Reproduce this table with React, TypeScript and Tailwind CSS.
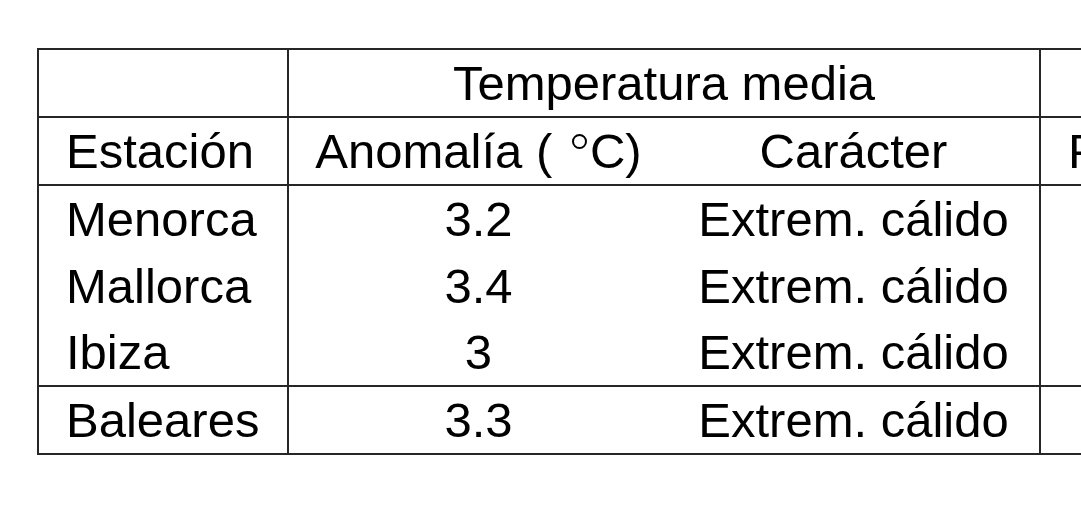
import React from 'react';

const rows = [
  { name: 'Menorca', anom: '3.2', car: 'Extrem. cálido', h: 'h-[66px]' },
  { name: 'Mallorca', anom: '3.4', car: 'Extrem. cálido', h: 'h-[67px]' },
  { name: 'Ibiza', anom: '3', car: 'Extrem. cálido', h: 'h-[66px]' },
];

const line = 'border-[#262626]';

const App: React.FC = () => {
  return (
    <div className="w-[1081px] h-[508px] overflow-hidden bg-white pt-[48px] pl-[37px] font-['Liberation_Sans',Arial,sans-serif] text-[49px] leading-[66px] text-black">
      <table className={`table-fixed w-[1404px] border-collapse border-2 ${line}`}>
        <colgroup>
          <col className="w-[250px]" />
          <col className="w-[380px]" />
          <col className="w-[372px]" />
          <col className="w-[402px]" />
        </colgroup>
        <thead>
          <tr className={`h-[66px] border-b-2 ${line}`}>
            <th className={`border-r-2 ${line} font-normal`}></th>
            <th colSpan={2} className={`border-r-2 ${line} font-normal text-center`}>
              Temperatura media
            </th>
            <th className="font-normal text-center">Precipitación</th>
          </tr>
          <tr className={`h-[66px] border-b-2 ${line}`}>
            <th className={`border-r-2 ${line} font-normal text-left px-[27px]`}>Estación</th>
            <th className="font-normal text-center whitespace-nowrap">
              Anomalía ({' '}
              <span className="inline-block ml-[6px] mr-[3px] w-[15px] h-[15px] rounded-full border-2 border-black align-[19px]"></span>
              C)
            </th>
            <th className={`border-r-2 ${line} font-normal text-center`}>Carácter</th>
            <th className="font-normal text-left px-[27px] whitespace-nowrap">Porcentaje</th>
          </tr>
        </thead>
        <tbody>
          {rows.map((r) => (
            <tr key={r.name} className={r.h}>
              <td className={`border-r-2 ${line} px-[27px]`}>{r.name}</td>
              <td className="text-center">{r.anom}</td>
              <td className={`border-r-2 ${line} text-center whitespace-nowrap`}>{r.car}</td>
              <td></td>
            </tr>
          ))}
          <tr className={`h-[67px] border-t-2 ${line}`}>
            <td className={`border-r-2 ${line} px-[27px]`}>Baleares</td>
            <td className="text-center">3.3</td>
            <td className={`border-r-2 ${line} text-center whitespace-nowrap`}>Extrem. cálido</td>
            <td></td>
          </tr>
        </tbody>
      </table>
    </div>
  );
};

export default App;
